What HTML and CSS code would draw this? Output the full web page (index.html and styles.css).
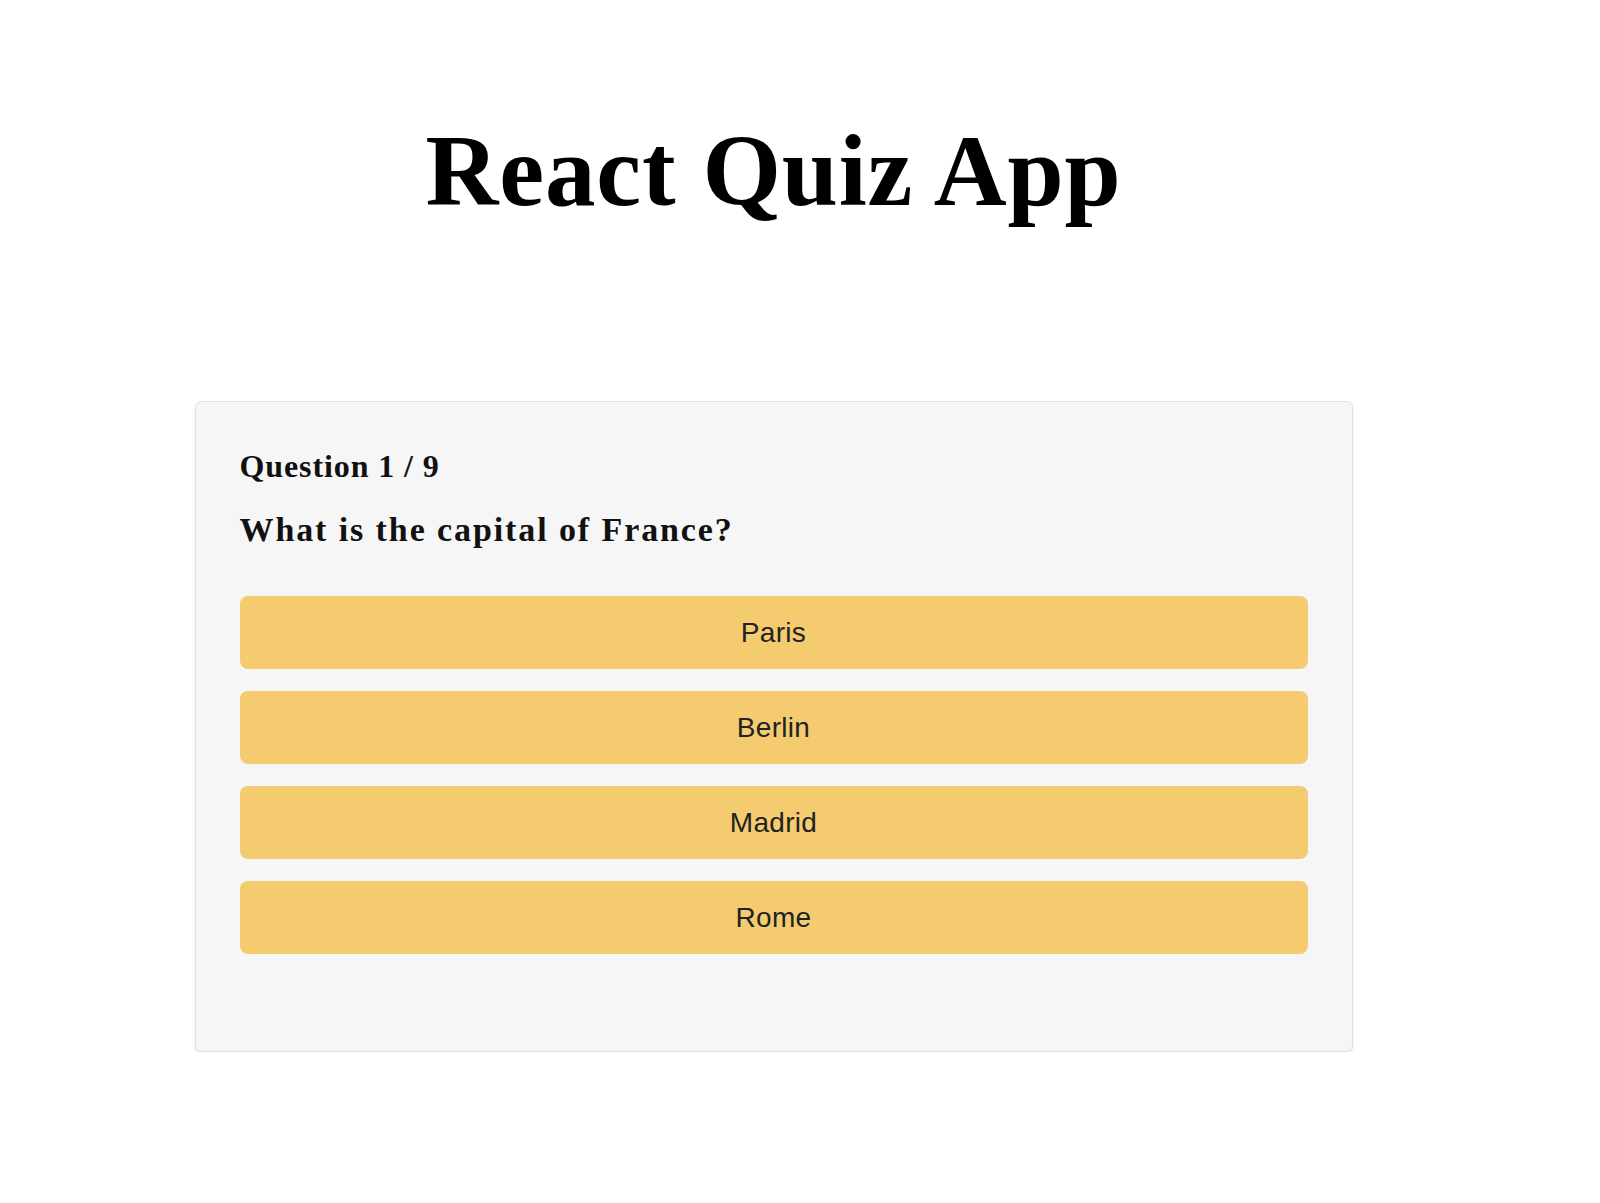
FILE: index.html
```html
<!DOCTYPE html>
<html lang="en">
<head>
<meta charset="utf-8">
<title>React Quiz App</title>
<link rel="stylesheet" href="styles.css">
</head>
<body>
<div class="app">
  <h1 class="title">React Quiz App</h1>
  <div class="card">
    <h3 class="count">Question 1 / 9</h3>
    <h2 class="question">What is the capital of France?</h2>
    <div class="options">
      <button class="option">Paris</button>
      <button class="option">Berlin</button>
      <button class="option">Madrid</button>
      <button class="option">Rome</button>
    </div>
  </div>
</div>
</body>
</html>
```

FILE: styles.css
```css
html, body {
  margin: 0;
  padding: 0;
  background: #ffffff;
}

.app {
  width: 1547px;
  padding-top: 113px;
  font-family: "Liberation Serif", "Times New Roman", serif;
  color: #000;
}

.title {
  margin: 0;
  text-align: center;
  font-size: 101px;
  line-height: 1.15;
  font-weight: bold;
  letter-spacing: 0.8px;
}

.card {
  box-sizing: border-box;
  width: 1158px;
  margin: 172px auto 0;
  padding: 46px 44px 97px;
  background: #f6f6f6;
  border: 1px solid #e2e2e2;
  border-radius: 6px;
  box-shadow: 0 2px 3px rgba(0, 0, 0, 0.08);
}

.count {
  margin: 0;
  font-size: 32px;
  line-height: 37px;
  font-weight: bold;
  letter-spacing: 0.9px;
  color: #111;
}

.question {
  margin: 26px 0 0;
  font-size: 34px;
  line-height: 38px;
  font-weight: bold;
  letter-spacing: 1.9px;
  color: #111;
}

.options {
  display: flex;
  flex-direction: column;
  gap: 22px;
  margin-top: 47px;
}

.option {
  height: 73px;
  border: none;
  border-radius: 8px;
  background: #f4cb6f;
  color: #222;
  font-family: "Liberation Sans", Arial, sans-serif;
  font-size: 28px;
  letter-spacing: 0.3px;
  padding: 0;
}
```
